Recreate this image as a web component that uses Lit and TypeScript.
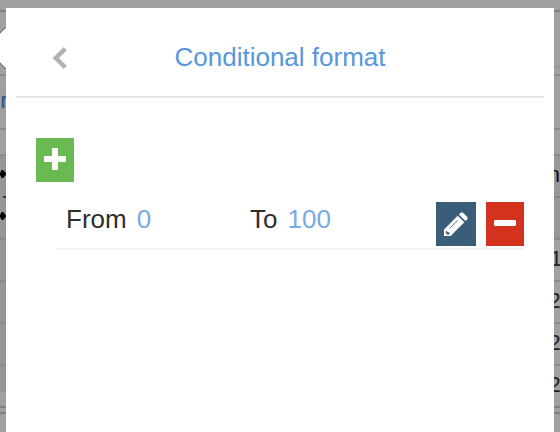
import { LitElement, html, css, svg } from "lit";
import { customElement, property } from "lit/decorators.js";

@customElement("table-backdrop")
class TableBackdrop extends LitElement {
  static styles = css`
    :host { display: block; width: 560px; height: 432px; }
    svg { display: block; }
    text { font-family: "Liberation Sans", Arial, sans-serif; font-size: 22px; }
  `;
  render() {
    const rules = [74, 128, 154, 238, 280, 322, 364];
    return html`<svg width="560" height="432" viewBox="0 0 560 432">
      <rect width="560" height="432" fill="#a0a0a0" />
      <rect y="154" width="280" height="238" fill="#969696" />
      <rect x="280" y="154" width="280" height="84" fill="#979797" />
      ${rules.map((y) => svg`<rect y=${y} width="560" height="2" fill="#8a8a8a" />`)}
      <rect x="280" y="66" width="280" height="2" fill="#929292" />
      <rect x="280" y="196" width="280" height="2" fill="#868686" />
      <rect y="10" width="560" height="2" fill="#7e7e7e" />
      <rect y="406" width="560" height="2" fill="#828282" />
      <rect y="412" width="560" height="2" fill="#828282" />
      <rect x="3" y="196" width="3" height="2" fill="#3a3a3a" />
      <path d="M-15 48 L8 25 V71 Z" fill="#fff" stroke="#777" stroke-width="1.2" />
      <text x="0.6" y="108" fill="#2f5c90" stroke="#2f5c90" stroke-width=".5">r</text>
      ${[174, 216].map((y) => svg`<path d="M-2 ${y - 1.5}H0.5L1.5 ${y - 4}H3L6 ${y - 1}V${y + 1}L3 ${y + 4}H1.5L0.5 ${y + 1.5}H-2Z" fill="#000" />`)}
      <text x="547.8" y="182" fill="#111">n</text>
      <text x="550" y="266" fill="#222">1</text>
      ${[308, 350, 392].map((y) => svg`<text x="548.6" y=${y} fill="#222">2</text>`)}
    </svg>`;
  }
}

@customElement("icon-button")
class IconButton extends LitElement {
  @property() icon = "plus";
  static styles = css`
    :host { display: block; }
    button {
      display: flex; align-items: center; justify-content: center;
      width: 38px; height: 44px; margin: 0; padding: 0; border: 0;
    }
    .plus { background: #6aba54; }
    .minus { background: #d3321f; }
    .edit { background: #3a5d79; width: 40px; }
    svg { display: block; }
  `;
  render() {
    const shapes: Record<string, unknown> = {
      plus: svg`<path fill="#fff" d="M9 0h4q1 0 1 1v7h7q1 0 1 1v4q0 1-1 1h-7v7q0 1-1 1H9q-1 0-1-1v-7H1q-1 0-1-1V9q0-1 1-1h7V1q0-1 1-1z" transform="translate(8 10)" />`,
      minus: svg`<rect x="8" y="18" width="22" height="6" rx="1.3" fill="#fff" />`,
      edit: svg`
        <path fill="#fff" d="M8 34v-6.6L21.7 13.7l6.6 6.6L14.6 34z" />
        <path fill="#fff" d="M22.9 12.5l1.6-1.6q1.4-1.3 2.8 0l3.8 3.8q1.3 1.4 0 2.8l-1.6 1.6z" />
        <path fill="#3a5d79" d="M9.7 29.6l1-1 .8 1.6h2v1.8l-.8.7h-1.2l-1.5-1.5z" />
        <path d="M13.3 26.7l8.4-8.4" stroke="#3a5d79" stroke-width=".8" fill="none" />`,
    };
    const w = this.icon === "edit" ? 40 : 38;
    return html`<button class=${this.icon} aria-label=${this.icon}>
      <svg width=${w} height="44" viewBox="0 0 ${w} 44">${shapes[this.icon]}</svg>
    </button>`;
  }
}

@customElement("app-root")
class AppRoot extends LitElement {
  static styles = css`
    :host {
      display: grid; width: 560px; height: 432px; overflow: hidden;
      font: 26px/30px "Liberation Sans", Arial, sans-serif; color: #2e2e2e;
    }
    table-backdrop, .dialog { grid-area: 1 / 1; }
    .dialog {
      z-index: 1; box-sizing: border-box; margin: 8px 6px 0; padding: 0 10px;
      background: #fff;
    }
    .header {
      display: grid; grid-template-columns: 70px 1fr 70px; align-items: center;
      box-sizing: border-box; height: 90px; padding-top: 10px;
      border-bottom: 2px solid #e5e5e5;
    }
    .back { display: block; margin: 2px 0 0 36px; }
    .title { color: #5797de; text-align: center; white-space: nowrap; }
    .content { padding: 40px 20px 0; }
    .row {
      display: flex; align-items: flex-start; box-sizing: border-box;
      height: 48px; margin: 20px 0 0 20px; padding-left: 10px;
      border-bottom: 2px solid #f1f1f1;
    }
    .field { display: flex; gap: 10px; width: 184px; padding-top: 2px; }
    .value { color: #77abe5; }
    .actions { display: flex; gap: 10px; margin-left: auto; }
  `;
  render() {
    return html`
      <table-backdrop></table-backdrop>
      <section class="dialog">
        <header class="header">
          <svg class="back" width="16" height="24" viewBox="0 0 16 24">
            <path d="M13.3 2.6L3.8 12L13.3 21.4" fill="none" stroke="#b2b2b2" stroke-width="4.4" />
          </svg>
          <span class="title">Conditional format</span>
        </header>
        <div class="content">
          <icon-button icon="plus"></icon-button>
          <div class="row">
            <div class="field"><span>From</span><span class="value">0</span></div>
            <div class="field"><span>To</span><span class="value">100</span></div>
            <div class="actions">
              <icon-button icon="edit"></icon-button>
              <icon-button icon="minus"></icon-button>
            </div>
          </div>
        </div>
      </section>
    `;
  }
}
